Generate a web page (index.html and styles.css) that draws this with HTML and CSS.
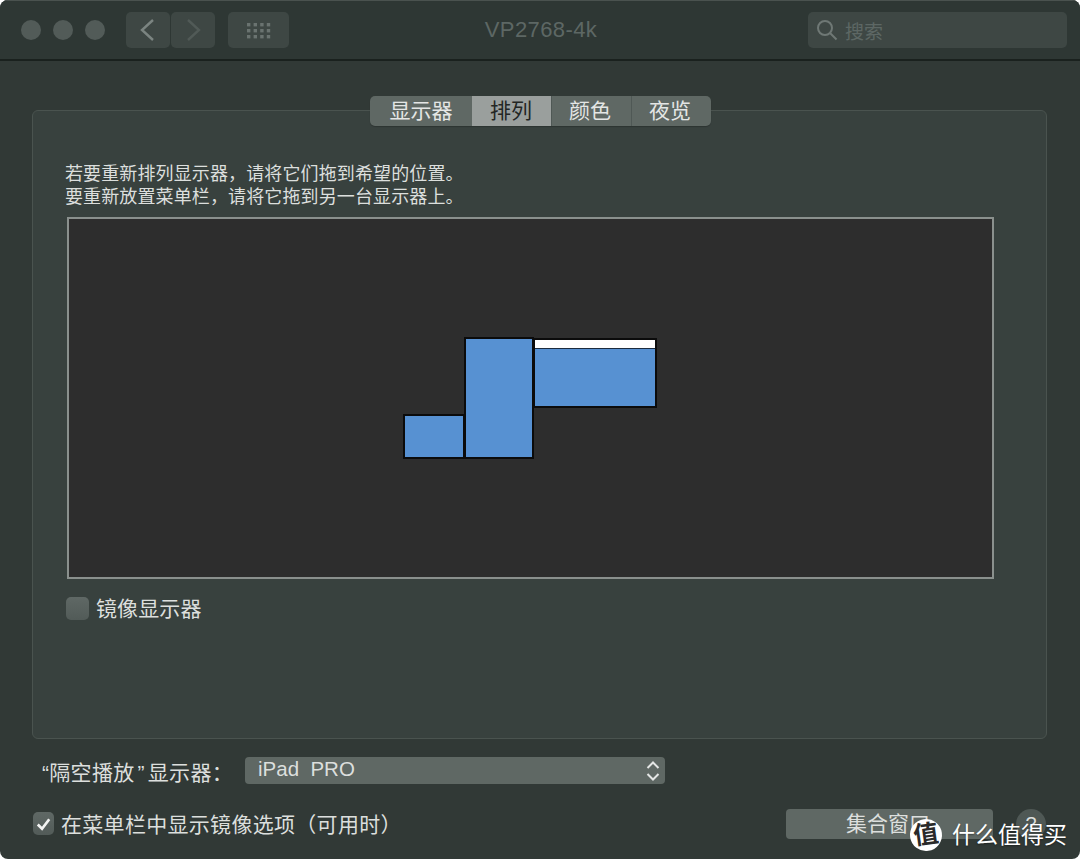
FILE: index.html
```html
<!DOCTYPE html>
<html lang="zh-CN">
<head>
    <meta charset="UTF-8">
    <meta name="viewport" content="width=device-width, initial-scale=1.0">
    <title>VP2768-4k</title>
    <link rel="stylesheet" href="styles.css">
</head>
<body>
    <div class="window">
        <div class="titlebar">
            <div class="titlebar-left">
                <div class="lights">
                    <span class="light"></span>
                    <span class="light"></span>
                    <span class="light"></span>
                </div>
                <div class="nav-group">
                    <div class="tool-button nav-button">
                        <svg width="44" height="36" viewBox="0 0 44 36"><path d="M27 8 L16 18 L27 28" class="chevron"/></svg>
                    </div>
                    <div class="tool-button nav-button">
                        <svg width="44" height="36" viewBox="0 0 44 36"><path d="M17 8 L28 18 L17 28" class="chevron chevron-off"/></svg>
                    </div>
                </div>
                <div class="tool-button grid-button">
                    <svg width="24" height="17" viewBox="0 0 24 17" class="grid-icon">
                        <rect x="0" y="1" width="3.4" height="3.4"/><rect x="6.6" y="1" width="3.4" height="3.4"/><rect x="13.2" y="1" width="3.4" height="3.4"/><rect x="19.8" y="1" width="3.4" height="3.4"/>
                        <rect x="0" y="7" width="3.4" height="3.4"/><rect x="6.6" y="7" width="3.4" height="3.4"/><rect x="13.2" y="7" width="3.4" height="3.4"/><rect x="19.8" y="7" width="3.4" height="3.4"/>
                        <rect x="0" y="13" width="3.4" height="3.4"/><rect x="6.6" y="13" width="3.4" height="3.4"/><rect x="13.2" y="13" width="3.4" height="3.4"/><rect x="19.8" y="13" width="3.4" height="3.4"/>
                    </svg>
                </div>
            </div>
            <div class="window-title">VP2768-4k</div>
            <div class="titlebar-right">
                <div class="search">
                    <svg width="22" height="22" viewBox="0 0 22 22" class="search-icon"><circle cx="9" cy="9" r="7"/><path d="M14 14 L20.5 20.5"/></svg>
                    <span class="search-text">搜索</span>
                </div>
            </div>
        </div>

        <div class="content">
            <div class="panel">
                <div class="tabs">
                    <div class="tab tab-first">显示器</div>
                    <div class="tab tab-active">排列</div>
                    <div class="tab">颜色</div>
                    <div class="tab">夜览</div>
                </div>
                <div class="panel-body">
                    <p class="hint">若要重新排列显示器，请将它们拖到希望的位置。<br>要重新放置菜单栏，请将它拖到另一台显示器上。</p>
                    <div class="arrange-box">
                        <div class="display display-small"></div>
                        <div class="display display-tall"></div>
                        <div class="display display-wide"><div class="menubar"></div></div>
                    </div>
                    <div class="mirror-row">
                        <span class="checkbox"></span>
                        <span class="mirror-label">镜像显示器</span>
                    </div>
                </div>
            </div>

            <div class="airplay-row">
                <span class="airplay-label">“隔空播放<span class="close-quote">”</span>显示器：</span>
                <div class="select">
                    <span class="select-value">iPad&nbsp;&nbsp;PRO</span>
                    <svg width="16" height="24" viewBox="0 0 16 24" class="select-arrows"><path d="M2.5 9 L8 3.5 L13.5 9"/><path d="M2.5 15 L8 20.5 L13.5 15"/></svg>
                </div>
            </div>

            <div class="options-row">
                <span class="checkbox checkbox-small">
                    <svg width="22" height="22" viewBox="0 0 22 22" class="check-icon"><path d="M5 11.5 L9.5 16 L17 6"/></svg>
                </span>
                <span class="options-label">在菜单栏中显示镜像选项（可用时）</span>
                <div class="gather-button">集合窗口</div>
                <div class="help-button">?</div>
            </div>
        </div>
    </div>

    <div class="watermark">
        <span class="watermark-badge">值</span>
        <span class="watermark-text">什么值得买</span>
    </div>
</body>
</html>
```

FILE: styles.css
```css
html, body {
    margin: 0;
    padding: 0;
}
body {
    width: 1080px;
    height: 859px;
    overflow: hidden;
    position: relative;
    background-color: #ffffff;
    font-family: "Liberation Sans", "Noto Sans CJK SC", sans-serif;
    color: #dcdfdd;
}
.window {
    height: 859px;
    box-sizing: border-box;
    border-radius: 8px;
    overflow: hidden;
    background-color: #313936;
}

/* title bar */
.titlebar {
    display: grid;
    grid-template-columns: 1fr auto 1fr;
    align-items: center;
    height: 61px;
    box-sizing: border-box;
    padding: 0 13px 0 21px;
    background-color: #2e3734;
    border-top: 1px solid #4a524f;
    border-bottom: 2px solid #1a211e;
}
.titlebar-left {
    display: flex;
    align-items: center;
}
.lights {
    display: flex;
    gap: 12px;
    margin-right: 21px;
}
.light {
    width: 20px;
    height: 20px;
    border-radius: 50%;
    background-color: #525b58;
}
.nav-group {
    display: flex;
    gap: 1px;
    margin-right: 13px;
}
.tool-button {
    display: flex;
    align-items: center;
    justify-content: center;
    height: 36px;
    border-radius: 5px;
    background-color: #3e4744;
}
.nav-button {
    width: 44px;
}
.grid-button {
    width: 61px;
}
.chevron {
    fill: none;
    stroke: #7b8481;
    stroke-width: 2.4;
}
.chevron-off {
    stroke: #515a57;
}
.grid-icon {
    fill: #6a7370;
}
.window-title {
    margin-right: 6px;
    font-size: 22px;
    letter-spacing: 0.4px;
    color: #5d6764;
}
.titlebar-right {
    display: flex;
    justify-content: flex-end;
}
.search {
    display: flex;
    align-items: center;
    width: 259px;
    height: 36px;
    box-sizing: border-box;
    padding-left: 8px;
    border-radius: 5px;
    background-color: #3e4744;
}
.search-icon {
    fill: none;
    stroke: #6f7875;
    stroke-width: 2;
    margin-right: 7px;
}
.search-text {
    font-size: 19px;
    color: #5d6764;
}

/* main panel */
.content {
    padding: 49px 33px 0 32px;
}
.panel {
    height: 629px;
    box-sizing: border-box;
    border: 1px solid #4a534f;
    border-radius: 6px;
    background-color: #38413e;
}
.tabs {
    display: flex;
    width: 341px;
    height: 30px;
    margin: -15px 0 0 337px;
    border-radius: 5px;
    overflow: hidden;
    background-color: #5f6864;
    box-shadow: 0 1px 1px rgba(0,0,0,0.2);
}
.tab {
    width: 80px;
    padding-right: 3px;
    line-height: 30px;
    text-align: center;
    font-size: 21px;
    color: #e4e6e5;
    border-left: 1px solid #4f5855;
    box-sizing: border-box;
}
.tab-first {
    width: 102px;
    padding-right: 0;
    border-left: none;
}
.tab-active {
    width: 79px;
    padding-right: 1px;
    border-left: none;
    background-color: #9a9f9d;
    color: #232624;
}
.panel-body {
    padding: 37px 0 0 32px;
}
.hint {
    margin: 0;
    font-size: 18px;
    line-height: 23px;
    letter-spacing: 0.12px;
}
.arrange-box {
    position: relative;
    width: 927px;
    height: 362px;
    box-sizing: border-box;
    margin: 8px 0 0 2px;
    border: 2px solid #8a908d;
    background-color: #2d2d2d;
}

/* displays sit on a free canvas, their place is the setting itself */
.display {
    position: absolute;
    box-sizing: border-box;
    border: 2px solid #0b0b0b;
    background-color: #5791d2;
}
.display-small {
    left: 334px;
    top: 195px;
    width: 62px;
    height: 45px;
}
.display-tall {
    left: 395px;
    top: 118px;
    width: 70px;
    height: 122px;
}
.display-wide {
    left: 464px;
    top: 119px;
    width: 124px;
    height: 70px;
}
.menubar {
    height: 8px;
    background-color: #ffffff;
    border-bottom: 1px solid #1c2c40;
}
.mirror-row {
    display: flex;
    align-items: center;
    gap: 7px;
    height: 24px;
    margin: 17px 0 0 1px;
    font-size: 21px;
}
.mirror-label {
    padding-bottom: 2px;
    letter-spacing: 0.1px;
}
.checkbox {
    display: flex;
    align-items: center;
    justify-content: center;
    width: 23px;
    height: 23px;
    border-radius: 5px;
    background-image: linear-gradient(#5f6865, #525b58);
}

/* bottom rows */
.airplay-row {
    display: flex;
    align-items: center;
    height: 27px;
    margin-top: 18px;
    padding-left: 10px;
}
.airplay-label {
    width: 203px;
    font-size: 21px;
    letter-spacing: 0.3px;
    white-space: nowrap;
}
.close-quote {
    margin: 0 3px;
}
.select {
    display: flex;
    align-items: center;
    justify-content: space-between;
    width: 420px;
    height: 27px;
    box-sizing: border-box;
    padding: 0 4px 0 13px;
    border-radius: 4px;
    background-color: #5f6864;
}
.select-value {
    padding-bottom: 3px;
    font-size: 20.5px;
}
.select-arrows {
    fill: none;
    stroke: #e4e6e5;
    stroke-width: 2;
}
.options-row {
    display: flex;
    align-items: center;
    height: 30px;
    margin-top: 25px;
    padding-left: 1px;
}
.checkbox-small {
    width: 21px;
    height: 23px;
    margin: -1px 7px 0 0;
}
.check-icon {
    fill: none;
    stroke: #f2f3f2;
    stroke-width: 2.8;
}
.options-label {
    width: 725px;
    padding-bottom: 3px;
    font-size: 21px;
    letter-spacing: 0.3px;
    white-space: nowrap;
}
.gather-button {
    width: 207px;
    height: 30px;
    box-sizing: border-box;
    padding-right: 3px;
    line-height: 30px;
    border-radius: 4px;
    text-align: center;
    font-size: 21px;
    background-color: #5f6864;
}
.help-button {
    width: 30px;
    height: 30px;
    margin-left: 23px;
    line-height: 30px;
    border-radius: 50%;
    text-align: center;
    font-size: 20px;
    background-color: #4f5855;
}

/* site watermark lies over the window */
.watermark {
    position: absolute;
    left: 910px;
    top: 816px;
    display: flex;
    align-items: center;
    gap: 10px;
    font-size: 23px;
    color: #ffffff;
    text-shadow: 0 1px 2px rgba(0,0,0,0.4);
}
.watermark-text {
    padding-bottom: 4px;
}
.watermark-badge {
    display: block;
    width: 32px;
    height: 32px;
    border-radius: 50%;
    line-height: 31px;
    text-align: center;
    font-size: 25px;
    font-weight: 700;
    text-shadow: none;
    transform: rotate(-8deg);
    background-color: #ffffff;
    color: #2a2a2a;
}
```
